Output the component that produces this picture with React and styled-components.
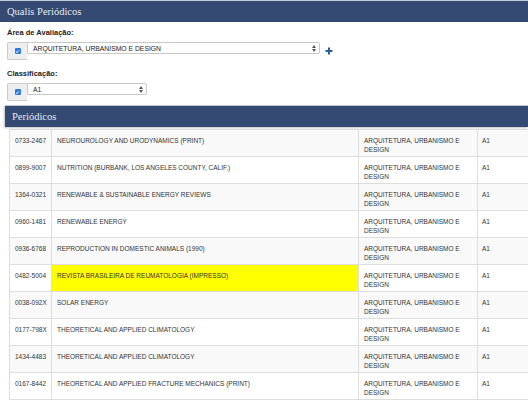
import styled, { createGlobalStyle } from 'styled-components';

const GlobalStyle = createGlobalStyle`
  html, body {
    margin: 0;
    padding: 0;
    background: #fff;
    overflow: hidden;
  }
  body {
    font-family: "Liberation Sans", Arial, sans-serif;
    color: #333;
  }
`;

const Page = styled.div`
  width: 528px;
  height: 400px;
  overflow: hidden;
`;

const TitleBar = styled.div`
  height: 21px;
  border-top: 1px solid #c3cad6;
  background: #344a72;
  color: #e4e9f1;
  font-family: "Liberation Serif", "Times New Roman", serif;
  font-size: 10.5px;
  display: flex;
  align-items: center;
  padding-left: ${(p) => p.indent || 7}px;
  margin-left: ${(p) => p.offset || 0}px;
  box-shadow: ${(p) => (p.shadow ? '-1px 1px 2px rgba(0,0,0,0.25)' : 'none')};
`;

const Form = styled.div`
  padding: 6px 7px 4px;
  display: flex;
  flex-direction: column;
`;

const Label = styled.div`
  font-weight: bold;
  font-size: 7.5px;
  line-height: 10px;
  color: #222;
  margin-top: ${(p) => p.top || 0}px;
  margin-bottom: 4px;
`;

const Group = styled.div`
  display: flex;
  align-items: flex-start;
`;

const Addon = styled.div`
  width: 19px;
  height: 16px;
  background: #eee;
  border: 1px solid #ccc;
  border-right: none;
  border-radius: 2px 0 0 2px;
  display: flex;
  align-items: center;
  justify-content: center;
`;

const Check = styled.span`
  width: 6px;
  height: 6px;
  background: #2f7be0;
  border-radius: 1px;
  display: flex;
  align-items: center;
  justify-content: center;
`;

const Select = styled.div`
  width: ${(p) => p.width}px;
  height: 12px;
  border: 1px solid #c8c8c8;
  border-radius: 0 2px 2px 0;
  background: #fff;
  display: flex;
  align-items: center;
  justify-content: space-between;
  padding: 0 3px 0 5px;
  box-sizing: border-box;
  font-size: 6.8px;
  color: #222;
`;

const Arrows = styled.span`
  display: flex;
  flex-direction: column;
  gap: 1px;
`;

const Plus = styled.span`
  margin: 5px 0 0 5px;
  display: flex;
`;

const Table = styled.table`
  margin-left: 9px;
  width: 580px;
  border-collapse: collapse;
  table-layout: fixed;
  font-size: 6.5px;
  color: #333;
  margin-top: 2px;
`;

const Row = styled.tr`
  height: 27px;
  background: ${(p) => (p.striped ? '#f9f9f9' : '#fff')};
`;

const Cell = styled.td`
  border: 1px solid #ddd;
  padding: 6px 5px 0 ${(p) => p.pl || 5}px;
  vertical-align: top;
  line-height: 9px;
  white-space: ${(p) => (p.nowrap ? 'nowrap' : 'normal')};
  background: ${(p) => (p.highlight ? '#ffff00' : 'transparent')};
  box-sizing: border-box;
`;

const rows = [
  ['0733-2467', 'NEUROUROLOGY AND URODYNAMICS (PRINT)'],
  ['0899-9007', 'NUTRITION (BURBANK, LOS ANGELES COUNTY, CALIF.)'],
  ['1364-0321', 'RENEWABLE & SUSTAINABLE ENERGY REVIEWS'],
  ['0960-1481', 'RENEWABLE ENERGY'],
  ['0936-6768', 'REPRODUCTION IN DOMESTIC ANIMALS (1990)'],
  ['0482-5004', 'REVISTA BRASILEIRA DE REUMATOLOGIA (IMPRESSO)', true],
  ['0038-092X', 'SOLAR ENERGY'],
  ['0177-798X', 'THEORETICAL AND APPLIED CLIMATOLOGY'],
  ['1434-4483', 'THEORETICAL AND APPLIED CLIMATOLOGY'],
  ['0167-8442', 'THEORETICAL AND APPLIED FRACTURE MECHANICS (PRINT)'],
];

function CheckBox() {
  return (
    <Addon>
      <Check>
        <svg width="5" height="5" viewBox="0 0 10 10">
          <path d="M2 5.2 L4.2 7.3 L8 2.8" fill="none" stroke="#fff" strokeWidth="1.8" />
        </svg>
      </Check>
    </Addon>
  );
}

function UpDown() {
  return (
    <Arrows>
      <svg width="4" height="3" viewBox="0 0 4 3">
        <path d="M0 3 L2 0 L4 3 Z" fill="#555" />
      </svg>
      <svg width="4" height="3" viewBox="0 0 4 3">
        <path d="M0 0 L2 3 L4 0 Z" fill="#555" />
      </svg>
    </Arrows>
  );
}

export default function App() {
  return (
    <Page>
      <GlobalStyle />
      <TitleBar>Qualis Periódicos</TitleBar>
      <Form>
        <Label>Área de Avaliação:</Label>
        <Group>
          <CheckBox />
          <Select width={293}>
            <span>ARQUITETURA, URBANISMO E DESIGN</span>
            <UpDown />
          </Select>
          <Plus>
            <svg width="8" height="8" viewBox="0 0 8 8">
              <path d="M4 0.5 V7.5 M0.5 4 H7.5" stroke="#2b5c9c" strokeWidth="2" />
            </svg>
          </Plus>
        </Group>
        <Label top={9}>Classificação:</Label>
        <Group>
          <CheckBox />
          <Select width={120}>
            <span>A1</span>
            <UpDown />
          </Select>
        </Group>
      </Form>
      <TitleBar offset={5} indent={7} shadow>Periódicos</TitleBar>
      <Table>
        <colgroup>
          <col style={{ width: 42 }} />
          <col style={{ width: 307 }} />
          <col style={{ width: 119 }} />
          <col />
        </colgroup>
        <tbody>
          {rows.map(([issn, title, hl], i) => (
            <Row key={issn} striped={i % 2 === 0}>
              <Cell pl={5} nowrap>{issn}</Cell>
              <Cell highlight={hl}>{title}</Cell>
              <Cell>ARQUITETURA, URBANISMO E DESIGN</Cell>
              <Cell pl={4}>A1</Cell>
            </Row>
          ))}
        </tbody>
      </Table>
    </Page>
  );
}
